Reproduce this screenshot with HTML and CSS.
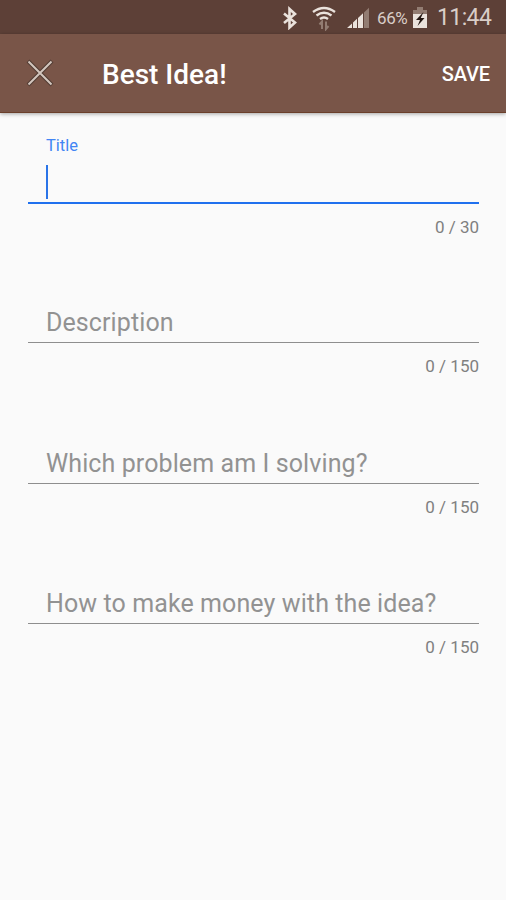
FILE: index.html
```html
<!DOCTYPE html>
<html lang="en">
    <head>
        <meta charset="utf-8" />
        <meta name="viewport" content="width=device-width, initial-scale=1" />
        <title>Best Idea!</title>
        <link rel="stylesheet" href="styles.css">
    </head>
    <body>
        <div class="status-bar">
            <svg class="ico-bluetooth" width="18" height="24" viewBox="0 0 18 24">
                <path d="M3 7.500l11 9-5.500 5V3L14 8 3 17" />
            </svg>
            <svg class="ico-wifi" width="26" height="26" viewBox="0 0 26 26">
                <path d="M2 7q11-8 22 0M5.500 10.500q7.500-5.500 15 0M9 14q4-3 8 0" />
                <path class="arrows" d="M11 24v-7.500l-2.500 3M15 16.500V24l2.500-3" />
            </svg>
            <svg class="ico-signal" width="24" height="24" viewBox="0 0 24 24">
                <path class="on" d="M0 22l5-4.600V22zM6 16.500l4-3.700V22H6zM11 11.900l5-4.600V22h-5z" />
                <path class="off" d="M17 6.400l5-4.600V22h-5z" />
            </svg>
            <span class="battery-text">66%</span>
            <svg class="ico-battery" width="16" height="24" viewBox="0 0 16 24">
                <path class="off" d="M5 1h6v3h4v5H1V4h4z" />
                <path class="on" d="M1 8h14v14H1z" />
                <path class="bolt" d="M11.500 6L4 14h4l-2.500 6 7-8H8.800z" />
            </svg>
            <span class="clock">11:44</span>
        </div>

        <header class="app-bar">
            <svg class="ico-close" width="28" height="28" viewBox="0 0 28 28">
                <path class="edge" d="M2 2l24 24M26 2L2 26" />
                <path d="M2.500 2.500l23 23M25.500 2.500l-23 23" />
            </svg>
            <h1 class="title">Best Idea!</h1>
            <span class="save">SAVE</span>
        </header>

        <main class="form">
            <div class="field focused">
                <div class="label">Title</div>
                <div class="input"><span class="caret"></span></div>
                <div class="counter">0 / 30</div>
            </div>
            <div class="field">
                <div class="label"></div>
                <div class="input"><span class="hint">Description</span></div>
                <div class="counter">0 / 150</div>
            </div>
            <div class="field">
                <div class="label"></div>
                <div class="input"><span class="hint">Which problem am I solving?</span></div>
                <div class="counter">0 / 150</div>
            </div>
            <div class="field">
                <div class="label"></div>
                <div class="input"><span class="hint">How to make money with the idea?</span></div>
                <div class="counter">0 / 150</div>
            </div>
        </main>
    </body>
</html>
```
FILE: styles.css
```css
* {
    box-sizing: border-box;
    margin: 0;
    padding: 0;
}

body {
    min-height: 900px;
    background: #fafafa;
    font-family: Roboto, "Liberation Sans", sans-serif;
}

svg {
    display: block;
    flex: none;
    fill: none;
}

/* status bar */
.status-bar {
    display: flex;
    align-items: center;
    justify-content: flex-end;
    height: 34px;
    padding: 1px 14px 0 0;
    background: #5d4037;
    color: #d9cec8;
    white-space: nowrap;
}

.ico-bluetooth {
    margin-right: 12px;
    stroke: #eae2dc;
    stroke-width: 2.6;
}

.ico-wifi {
    margin-right: 10px;
    stroke: #eae2dc;
    stroke-width: 2.4;
}

.ico-wifi .arrows {
    stroke: #927c72;
    stroke-width: 2;
}

.ico-signal {
    margin-right: 6px;
}

.on {
    fill: #eae2dc;
}

.off {
    fill: #927c72;
}

.bolt {
    fill: #211511;
}

.battery-text {
    width: 31px;
    margin-right: 4px;
    font-size: 17px;
    letter-spacing: -0.4px;
}

.ico-battery {
    margin-right: 9px;
}

.clock {
    width: 55px;
    font-size: 23px;
    letter-spacing: -0.6px;
}

/* app bar */
.app-bar {
    display: flex;
    align-items: center;
    height: 79px;
    padding: 0 16px 0 26px;
    border-bottom: 1px solid #6b3f2b;
    background: #795548;
    box-shadow: 0 1px 4px rgba(0, 0, 0, 0.35);
    color: #fff;
}

.ico-close path {
    stroke: #d3c6be;
    stroke-width: 2;
}

.ico-close .edge {
    stroke: #513c33;
    stroke-width: 4;
}

.title {
    flex: 1;
    padding-top: 3px;
    margin-left: 48px;
    font-size: 28px;
    font-weight: 500;
    line-height: 32px;
}

.save {
    padding-top: 2px;
    font-size: 20px;
    font-weight: 500;
    letter-spacing: -0.1px;
}

/* form */
.form {
    padding: 11px 27px 0 28px;
}

.field {
    height: 140.3px;
}

.label {
    height: 42px;
    padding-left: 18px;
    color: #4285f4;
    font-size: 16.5px;
    line-height: 44px;
}

.input {
    display: flex;
    height: 37px;
    padding-left: 18px;
    border-bottom: 1px solid #8e8e8e;
    line-height: 33px;
}

.focused .input {
    height: 38px;
    border-bottom: 2px solid #1f70ee;
}

.caret {
    width: 2px;
    height: 34px;
    margin-top: -1px;
    background: #2a74e8;
}

.hint {
    color: #929292;
    font-size: 25px;
    letter-spacing: 0.1px;
    white-space: nowrap;
}

.counter {
    height: 46px;
    color: #808080;
    font-size: 17px;
    line-height: 47px;
    text-align: right;
}
```
